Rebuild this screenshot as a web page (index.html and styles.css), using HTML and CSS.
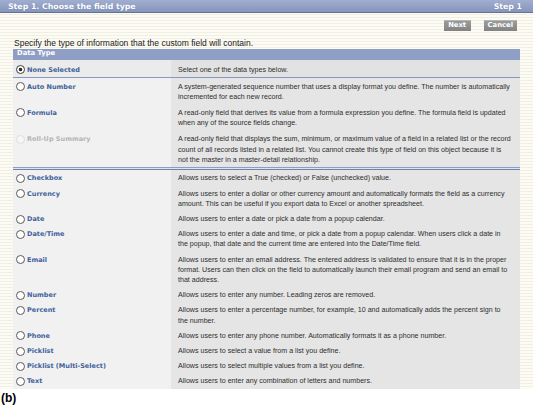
FILE: index.html
```html
<!DOCTYPE html>
<html>
<head>
<meta charset="utf-8">
<link rel="stylesheet" href="styles.css">
</head>
<body>
<div class="page">
  <div class="titlebar"><span>Step 1. Choose the field type</span><span>Step 1</span></div>
  <div class="actions"><span class="btn">Next</span><span class="btn">Cancel</span></div>
  <p class="intro">Specify the type of information that the custom field will contain.</p>
  <div class="types">
    <div class="types-head">Data Type</div>
    <div class="row row-none">
      <div class="label"><span class="radio checked"></span><span>None Selected</span></div>
      <div class="desc">Select one of the data types below.</div>
    </div>
    <div class="row row-top">
      <div class="label"><span class="radio"></span><span>Auto Number</span></div>
      <div class="desc">A system-generated sequence number that uses a display format you define. The number is automatically incremented for each new record.</div>
    </div>
    <div class="row row-top">
      <div class="label"><span class="radio"></span><span>Formula</span></div>
      <div class="desc">A read-only field that derives its value from a formula expression you define. The formula field is updated when any of the source fields change.</div>
    </div>
    <div class="row row-top">
      <div class="label disabled"><span class="radio"></span><span>Roll-Up Summary</span></div>
      <div class="desc">A read-only field that displays the sum, minimum, or maximum value of a field in a related list or the record count of all records listed in a related list. You cannot create this type of field on this object because it is not the master in a master-detail relationship.</div>
    </div>
    <div class="sep"></div>
    <div class="row">
      <div class="label"><span class="radio"></span><span>Checkbox</span></div>
      <div class="desc">Allows users to select a True (checked) or False (unchecked) value.</div>
    </div>
    <div class="row">
      <div class="label"><span class="radio"></span><span>Currency</span></div>
      <div class="desc">Allows users to enter a dollar or other currency amount and automatically formats the field as a currency amount. This can be useful if you export data to Excel or another spreadsheet.</div>
    </div>
    <div class="row">
      <div class="label"><span class="radio"></span><span>Date</span></div>
      <div class="desc">Allows users to enter a date or pick a date from a popup calendar.</div>
    </div>
    <div class="row">
      <div class="label"><span class="radio"></span><span>Date/Time</span></div>
      <div class="desc">Allows users to enter a date and time, or pick a date from a popup calendar. When users click a date in the popup, that date and the current time are entered into the Date/Time field.</div>
    </div>
    <div class="row">
      <div class="label"><span class="radio"></span><span>Email</span></div>
      <div class="desc">Allows users to enter an email address. The entered address is validated to ensure that it is in the proper format. Users can then click on the field to automatically launch their email program and send an email to that address.</div>
    </div>
    <div class="row">
      <div class="label"><span class="radio"></span><span>Number</span></div>
      <div class="desc">Allows users to enter any number. Leading zeros are removed.</div>
    </div>
    <div class="row">
      <div class="label"><span class="radio"></span><span>Percent</span></div>
      <div class="desc">Allows users to enter a percentage number, for example, 10 and automatically adds the percent sign to the number.</div>
    </div>
    <div class="row">
      <div class="label"><span class="radio"></span><span>Phone</span></div>
      <div class="desc">Allows users to enter any phone number. Automatically formats it as a phone number.</div>
    </div>
    <div class="row">
      <div class="label"><span class="radio"></span><span>Picklist</span></div>
      <div class="desc">Allows users to select a value from a list you define.</div>
    </div>
    <div class="row">
      <div class="label"><span class="radio"></span><span>Picklist (Multi-Select)</span></div>
      <div class="desc">Allows users to select multiple values from a list you define.</div>
    </div>
    <div class="row">
      <div class="label"><span class="radio"></span><span>Text</span></div>
      <div class="desc">Allows users to enter any combination of letters and numbers.</div>
    </div>
  </div>
</div>
<div class="caption">(b)</div>
</body>
</html>
```
FILE: styles.css
```css
html, body {
  margin: 0;
  padding: 0;
  background: #ffffff;
  font-family: "Liberation Sans", Arial, sans-serif;
}

.page {
  background: repeating-linear-gradient(to bottom, #fcfbf4 0, #fcfbf4 2px, #f1efe3 2px, #f1efe3 3px);
}

.titlebar {
  height: 13px;
  box-sizing: border-box;
  display: flex;
  justify-content: space-between;
  align-items: center;
  padding: 0 11px 0 8px;
  background: linear-gradient(to bottom, #a1aed0, #8595bd);
  border-bottom: 1px solid #66728f;
  color: #ffffff;
  font: bold 7.8px "DejaVu Sans", Verdana, sans-serif;
  text-shadow: 0 0 1px rgba(60, 70, 100, 0.4);
  margin-bottom: 1px;
}

.actions {
  display: flex;
  justify-content: flex-end;
  gap: 13px;
  padding: 6px 16px 0 0;
}

.btn {
  display: block;
  min-width: 27px;
  height: 11px;
  line-height: 11px;
  padding: 0 4px;
  text-align: center;
  background: linear-gradient(to bottom, #9b9b9b, #828282);
  border-top: 1px solid #b4b4b4;
  box-sizing: border-box;
  color: #ffffff;
  font: bold 6.8px "DejaVu Sans", Verdana, sans-serif;
}

.intro {
  margin: 7px 0 0 14px;
  font-size: 8.5px;
  line-height: 11px;
  color: #222222;
}

.types {
  margin: 0 13px;
}

.types-head {
  height: 11px;
  line-height: 11px;
  padding-left: 4px;
  background: #8f9ec4;
  color: #ffffff;
  font: bold 6.8px "DejaVu Sans", Verdana, sans-serif;
}

.row {
  display: grid;
  grid-template-columns: 158px 1fr;
}

.label {
  display: flex;
  align-items: flex-start;
  gap: 2px;
  padding: 3px 0 2px 3px;
  background: #f1f1f1;
  color: #41619a;
  font: bold 6.5px "DejaVu Sans", Verdana, sans-serif;
  line-height: 10.2px;
}

.desc {
  padding: 3px 8px 2px 7px;
  background: #e5e5e5;
  color: #2e2e2e;
  font-size: 7.1px;
  line-height: 10.2px;
}

.row-top .label,
.row-top .desc {
  padding-top: 3.5px;
  padding-bottom: 2.5px;
}

.row-none {
  height: 16px;
  border-bottom: 2px solid #8799c2;
}

.row-none .label {
  background: #ebebeb;
  padding-top: 4.5px;
}

.row-none .desc {
  background: #e2e2e2;
  padding-top: 4.5px;
}

.radio {
  flex: none;
  width: 9px;
  height: 9px;
  margin-top: 0.5px;
  box-sizing: border-box;
  border: 1px solid #5a5a5a;
  border-radius: 50%;
  background: #ffffff;
}

.radio.checked {
  background: radial-gradient(circle, #2f2f2f 0, #2f2f2f 1.6px, #ffffff 2.1px);
  border-color: #3d3d3d;
}

.disabled {
  color: #b5b5b5;
}

.disabled .radio {
  border-color: #dddddd;
  background: #f6f6f6;
}

.sep {
  height: 3px;
  box-sizing: border-box;
  border-top: 1px solid #8e9dc2;
  border-bottom: 1px solid #7081ab;
  background: #dfe3ee;
}

.caption {
  padding: 2px 0 0 1px;
  font: bold 12px "Liberation Sans", Arial, sans-serif;
  line-height: 14px;
  color: #000000;
}
```
